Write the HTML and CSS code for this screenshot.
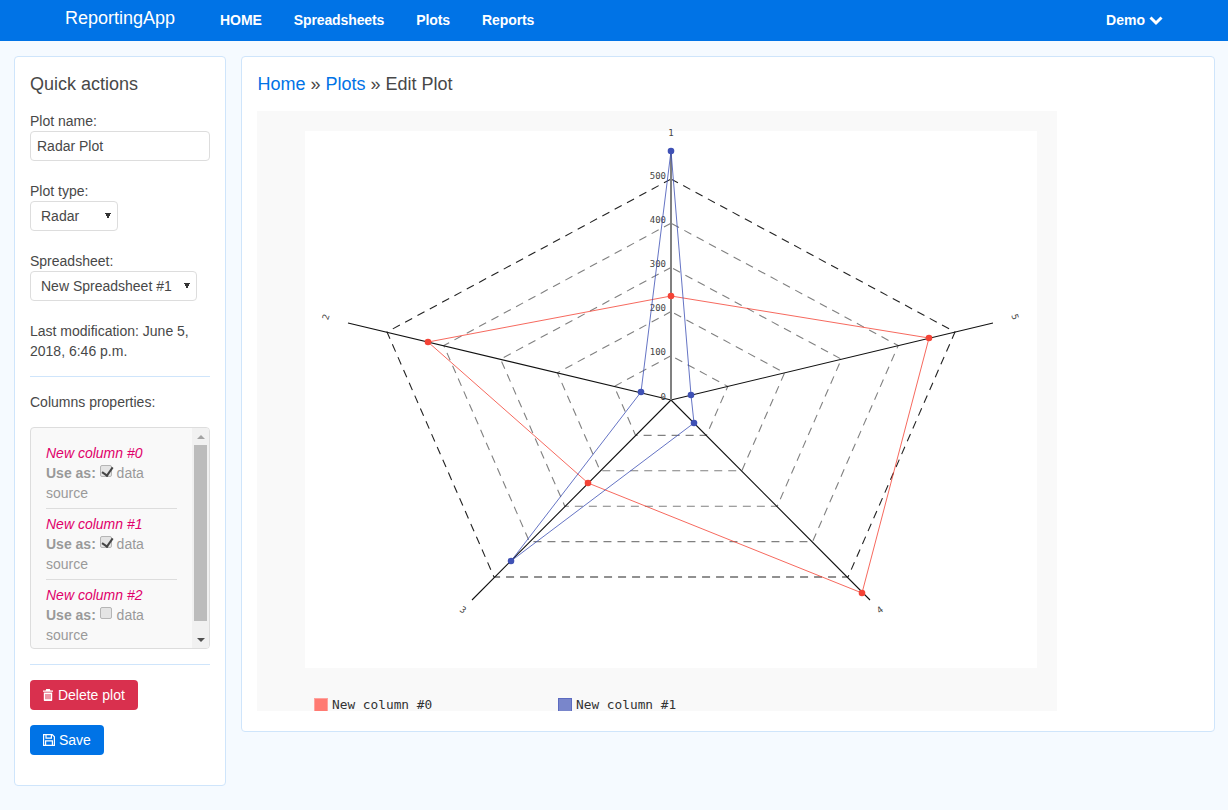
FILE: index.html
```html
<!DOCTYPE html>
<html lang="en">
<head>
    <meta charset="UTF-8">
    <meta name="viewport" content="width=device-width, initial-scale=1.0">
    <title>Edit Plot - ReportingApp</title>
    <link rel="stylesheet" href="styles.css">
</head>
<body>
    <nav class="navbar">
        <a class="brand" href="#">ReportingApp</a>
        <ul class="nav-links">
            <li><a href="#">HOME</a></li>
            <li><a href="#">Spreadsheets</a></li>
            <li><a href="#">Plots</a></li>
            <li><a href="#">Reports</a></li>
        </ul>
        <a class="user-menu" href="#">Demo
            <svg class="chevron" viewBox="0 0 14 10" width="14" height="10"><path d="M1.500 1.500 7 7 12.500 1.500" fill="none" stroke="#fff" stroke-width="3"/></svg>
        </a>
    </nav>

    <div class="page">
        <aside class="card sidebar">
            <h2 class="card-title">Quick actions</h2>

            <div class="form-group">
                <label for="plotName">Plot name:</label>
                <input id="plotName" class="field field-wide" type="text" value="Radar Plot">
            </div>
            <div class="form-group">
                <label for="plotType">Plot type:</label>
                <select id="plotType" class="field field-select field-type">
                    <option>Radar</option>
                </select>
            </div>
            <div class="form-group">
                <label for="sheet">Spreadsheet:</label>
                <select id="sheet" class="field field-select field-sheet">
                    <option>New Spreadsheet #1</option>
                </select>
            </div>

            <p class="modified">Last modification: June 5, 2018, 6:46 p.m.</p>
            <hr class="rule">
            <p class="columns-title">Columns properties:</p>

            <div class="columns-box">
                <div class="columns-list">
                    <div class="column-item">
                        <em>New column #0</em><br>
                        <b>Use as:</b> <input class="check" type="checkbox" checked> <span>data</span> <span>source</span>
                    </div>
                    <div class="column-item">
                        <em>New column #1</em><br>
                        <b>Use as:</b> <input class="check" type="checkbox" checked> <span>data</span> <span>source</span>
                    </div>
                    <div class="column-item">
                        <em>New column #2</em><br>
                        <b>Use as:</b> <input class="check" type="checkbox"> <span>data</span> <span>source</span>
                    </div>
                </div>
                <div class="scrollbar">
                    <div class="scroll-btn"><div class="arrow-up"></div></div>
                    <div class="scroll-track"><div class="scroll-thumb"></div></div>
                    <div class="scroll-btn"><div class="arrow-down"></div></div>
                </div>
            </div>

            <hr class="rule">

            <button class="btn btn-danger">
                <svg class="icon-trash" viewBox="0 0 10 12" width="10" height="12"><path fill="#fff" fill-rule="evenodd" d="M3.200 0h3.600l.6 1.400H10v1.300H0V1.400h2.600zM.8 3.400h8.400V11c0 .6-.4 1-1 1H1.800c-.6 0-1-.4-1-1zM2.500 5v5.300h1V5zM4.500 5v5.300h1V5zM6.500 5v5.300h1V5z"/></svg>
                Delete plot
            </button>
            <button class="btn btn-primary">
                <svg viewBox="0 0 12 12" width="12" height="12"><path fill="none" stroke="#fff" stroke-width="1.200" d="M.6.600h8.600l2.200 2.200v8.600H.6zM3 .8v3.400h5.400V.8M2.600 11.200V6.800h6.800v4.400"/></svg>
                Save
            </button>
        </aside>

        <main class="card content">
            <div class="breadcrumb"><a href="#">Home</a> » <a href="#">Plots</a> » Edit Plot</div>

            <svg class="chart" viewBox="257 111 800 600" width="800" height="600">
                <rect class="chart-bg" x="257" y="111" width="800" height="600"/>
                <rect x="305" y="131" width="732" height="537" fill="#fff"/>

                <!-- rings -->
                <polygon class="ring" points="671,355.800 614.200,386.400 635.600,435.400 706.400,435.400 727.800,386.400"/>
                <polygon class="ring" points="671,311.600 557.400,372.800 600.200,470.800 741.800,470.800 784.600,372.800"/>
                <polygon class="ring" points="671,267.400 500.600,359.200 564.800,506.200 777.200,506.200 841.400,359.200"/>
                <polygon class="ring" points="671,223.200 443.800,345.600 529.400,541.600 812.600,541.600 898.200,345.600"/>
                <polygon class="ring ring-outer" points="671,179 387,332 494,577 848,577 955,332"/>

                <!-- axes -->
                <path class="axis" d="M671 400 348 323M671 400 472 600M671 400 870 600M671 400 993 323"/>
                <path class="axis-top" d="M671 400V151"/>

                <!-- tick labels -->
                <g class="tick">
                    <text x="666" y="179">500</text>
                    <text x="666" y="223">400</text>
                    <text x="666" y="267">300</text>
                    <text x="666" y="311">200</text>
                    <text x="666" y="355">100</text>
                    <text x="666" y="400">0</text>
                </g>
                <g class="axis-label">
                    <text x="671" y="136">1</text>
                    <text transform="translate(326 317) rotate(-72)" y="3">2</text>
                    <text transform="translate(463 610) rotate(36)" y="3">3</text>
                    <text transform="translate(880 610) rotate(-36)" y="3">4</text>
                    <text transform="translate(1015 317) rotate(72)" y="3">5</text>
                </g>

                <!-- series -->
                <polygon class="series series-red" points="671,296 428,342 588,483 862,593 929,338"/>
                <polygon class="series series-blue" points="671,151 641,392 511,561 694,423 691,395"/>
                <g class="dots-red">
                    <circle cx="671" cy="296" r="3.300"/>
                    <circle cx="428" cy="342" r="3.300"/>
                    <circle cx="588" cy="483" r="3.300"/>
                    <circle cx="862" cy="593" r="3.300"/>
                    <circle cx="929" cy="338" r="3.300"/>
                </g>
                <g class="dots-blue">
                    <circle cx="671" cy="151" r="3.300"/>
                    <circle cx="641" cy="392" r="3.300"/>
                    <circle cx="511" cy="561" r="3.300"/>
                    <circle cx="694" cy="423" r="3.300"/>
                    <circle cx="691" cy="395" r="3.300"/>
                </g>

                <!-- legend -->
                <rect class="legend-red" x="314.500" y="698.500" width="13" height="13"/>
                <text class="legend-text" x="332" y="709">New column #0</text>
                <rect class="legend-blue" x="558.500" y="698.500" width="13" height="13"/>
                <text class="legend-text" x="576" y="709">New column #1</text>
            </svg>
        </main>
    </div>
</body>
</html>
```

FILE: styles.css
```css
* {
    box-sizing: border-box;
}

body {
    margin: 0;
    font-family: "Liberation Sans", Arial, sans-serif;
    font-size: 14px;
    line-height: 20px;
    color: #484848;
    background-color: #f5faff;
}

a {
    color: #0073e6;
    text-decoration: none;
}

.navbar {
    display: flex;
    align-items: center;
    height: 41px;
    padding: 0 65px 2px;
    background-color: #0073e6;
}

.brand {
    margin-right: 45px;
    margin-top: -4px;
    font-size: 18px;
    color: #fff;
}

.nav-links {
    display: flex;
    gap: 32px;
    margin: 0;
    padding: 0;
    list-style: none;
    letter-spacing: -0.1px;
}

.nav-links a,
.user-menu {
    font-weight: bold;
    color: #fff;
}

.user-menu {
    display: flex;
    align-items: center;
    gap: 4px;
    margin-left: auto;
}

.chevron {
    margin-top: 2px;
}

.page {
    display: flex;
    align-items: flex-start;
    gap: 15px;
    padding: 15px 13px 24px 14px;
}

.card {
    background-color: #fff;
    border: 1px solid #cfe5fb;
    border-radius: 4px;
    padding: 15px;
}

.sidebar {
    flex: 0 0 212px;
}

.content {
    flex: 1;
    padding-bottom: 20px;
}

.card-title {
    margin: 0 0 15px;
    font-size: 18px;
    font-weight: normal;
    line-height: 24px;
}

.form-group {
    margin-bottom: 20px;
}

.form-group label {
    display: block;
}

.field {
    display: block;
    height: 30px;
    font-family: inherit;
    font-size: 14px;
    color: #484848;
    background-color: #fff;
    border: 1px solid #ddd;
    border-radius: 4px;
}

.field-wide {
    width: 100%;
    padding: 0 6px;
}

.field-select {
    appearance: none;
    padding: 0 10px;
    background-image: linear-gradient(to top right, transparent 50%, #333 50%), linear-gradient(to top left, transparent 50%, #333 50%);
    background-repeat: no-repeat;
    background-size: 3px 6px;
    background-position: right 9px center, right 6px center;
}

.field-type {
    width: 88px;
}

.field-sheet {
    width: 167px;
}

.modified {
    margin: 0;
}

.rule {
    height: 1px;
    margin: 15px 0;
    border: 0;
    background-color: #cfe5fb;
}

.columns-title {
    margin: 0 0 15px;
}

.columns-box {
    display: flex;
    height: 222px;
    overflow: hidden;
    color: #999;
    background-color: #f9f9f9;
    border: 1px solid #ddd;
    border-radius: 4px;
}

.columns-list {
    flex: 1;
    overflow: hidden;
    padding: 15px 15px 0;
}

.scrollbar {
    display: flex;
    flex-direction: column;
    flex: 0 0 17px;
    background-color: #f1f1f1;
}

.scroll-btn {
    display: flex;
    align-items: center;
    justify-content: center;
    flex: 0 0 17px;
}

.arrow-up {
    border: solid transparent;
    border-width: 0 4px 4px;
    border-bottom-color: #a3a3a3;
}

.arrow-down {
    border: solid transparent;
    border-width: 4px 4px 0;
    border-top-color: #505050;
}

.scroll-track {
    flex: 1;
    padding: 0 2px;
}

.scroll-thumb {
    height: 176px;
    background-color: #bcbcbc;
}

.column-item {
    padding-bottom: 5px;
    margin-bottom: 5px;
    border-bottom: 1px solid #ddd;
}

.column-item:last-child {
    padding-bottom: 0;
    margin-bottom: 0;
    border-bottom: 0;
}

.column-item em {
    color: #e0006a;
}

.check {
    position: relative;
    appearance: none;
    width: 12px;
    height: 12px;
    margin: 0 1px 0 0;
    vertical-align: 1px;
    background-color: #e4e4e4;
    border: 1px solid #b5b5b5;
    border-radius: 2px;
}

.check:checked::after {
    content: "";
    position: absolute;
    left: 3px;
    top: -1px;
    width: 5px;
    height: 9px;
    border: solid #444;
    border-width: 0 2.500px 2.500px 0;
    transform: rotate(35deg);
}

.btn {
    display: block;
    height: 30px;
    padding: 0 13px;
    font-family: inherit;
    font-size: 14px;
    color: #fff;
    border: 0;
    border-radius: 4px;
}

.btn svg {
    vertical-align: -1px;
}

.icon-trash {
    margin-right: 1px;
}

.btn-danger {
    background-color: #d9304e;
    margin-bottom: 15px;
}

.btn-primary {
    background-color: #0073e6;
    margin-bottom: 15px;
}

.breadcrumb {
    margin-bottom: 15px;
    margin-left: 0.500px;
    font-size: 18px;
    line-height: 24px;
}

.chart {
    display: block;
}

.chart-bg {
    fill: #f9f9f9;
}

.ring {
    fill: none;
    stroke: #808080;
    stroke-width: 1.100;
    stroke-dasharray: 8 6;
}

.ring-outer {
    stroke: #222;
}

.axis {
    fill: none;
    stroke: #111;
    stroke-width: 1.100;
}

.axis-top {
    fill: none;
    stroke: #808080;
    stroke-width: 2;
}

.tick text {
    font-family: "DejaVu Sans Mono", monospace;
    font-size: 9px;
    text-anchor: end;
    fill: #444;
}

.axis-label text {
    font-family: "DejaVu Sans Mono", monospace;
    font-size: 9px;
    text-anchor: middle;
    fill: #444;
}

.series {
    fill: none;
    stroke-width: 1;
}

.series-red {
    stroke: #f44336;
    stroke-opacity: 0.8;
}

.series-blue {
    stroke: #3f51b5;
    stroke-opacity: 0.8;
}

.dots-red {
    fill: #f44336;
}

.dots-blue {
    fill: #3f51b5;
}

.legend-red {
    fill: #ff7a72;
    stroke: #ffa39e;
}

.legend-blue {
    fill: #7986cb;
    stroke: #5c6bc0;
}

.legend-text {
    font-family: "DejaVu Sans Mono", monospace;
    font-size: 12.800px;
    fill: #333;
}
```
